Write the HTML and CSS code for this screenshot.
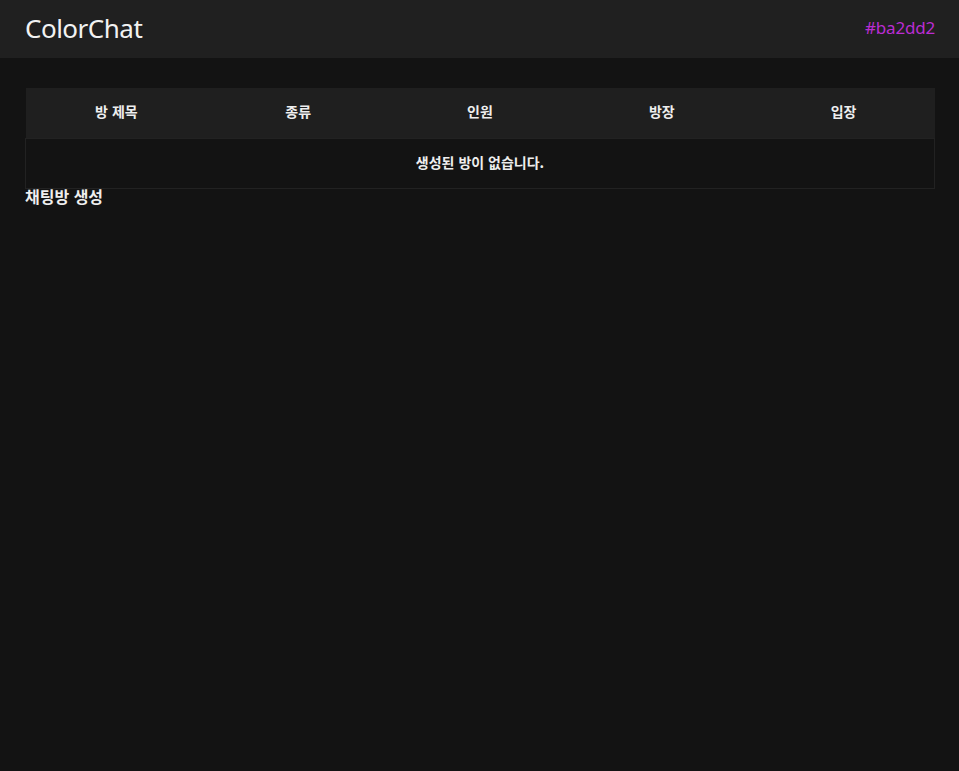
FILE: index.html
```html
<!DOCTYPE html>
<html lang="ko">
<head>
<meta charset="utf-8">
<title>ColorChat</title>
<link rel="stylesheet" href="styles.css">
</head>
<body>
<header class="topbar">
  <h1 class="logo">ColorChat</h1>
  <span class="user-color">#ba2dd2</span>
</header>
<main class="content">
  <table class="rooms">
    <thead>
      <tr>
        <th>방 제목</th>
        <th>종류</th>
        <th>인원</th>
        <th>방장</th>
        <th>입장</th>
      </tr>
    </thead>
    <tbody>
      <tr>
        <td colspan="5">생성된 방이 없습니다.</td>
      </tr>
    </tbody>
  </table>
  <div class="create">채팅방 생성</div>
</main>
</body>
</html>
```

FILE: styles.css
```css
html, body {
  margin: 0;
  padding: 0;
  height: 100%;
}
body {
  background: #131313;
  color: #eeeeee;
  font-family: "Noto Sans CJK KR", "Noto Sans", sans-serif;
}
.topbar {
  height: 58px;
  background: #202020;
  display: flex;
  align-items: center;
  justify-content: space-between;
  padding: 0 24px 3px 25px;
  box-sizing: border-box;
}
.logo {
  margin: 0;
  font-family: "Noto Sans", sans-serif;
  font-size: 26px;
  font-weight: 400;
  color: #f2f2f2;
  letter-spacing: -0.5px;
}
.user-color {
  color: #ba2dd2;
  font-family: "Noto Sans", sans-serif;
  font-size: 17px;
  letter-spacing: -0.2px;
}
.content {
  padding: 30px 24px 0 25px;
}
.rooms {
  width: 100%;
  border-collapse: collapse;
  table-layout: fixed;
}
.rooms th {
  background: #1f1f1f;
  height: 50px;
  padding: 0 0 3px;
  box-sizing: border-box;
  font-size: 14px;
  font-weight: 700;
  color: #eeeeee;
}
.rooms tbody {
  border: 1px solid #222222;
}
.rooms td {
  height: 50px;
  padding: 0 0 2px;
  box-sizing: border-box;
  text-align: center;
  font-size: 14px;
  font-weight: 700;
  color: #eeeeee;
}
.create {
  font-size: 16px;
  font-weight: 700;
  color: #eeeeee;
  line-height: 18px;
  margin-top: -2px;
}
```
